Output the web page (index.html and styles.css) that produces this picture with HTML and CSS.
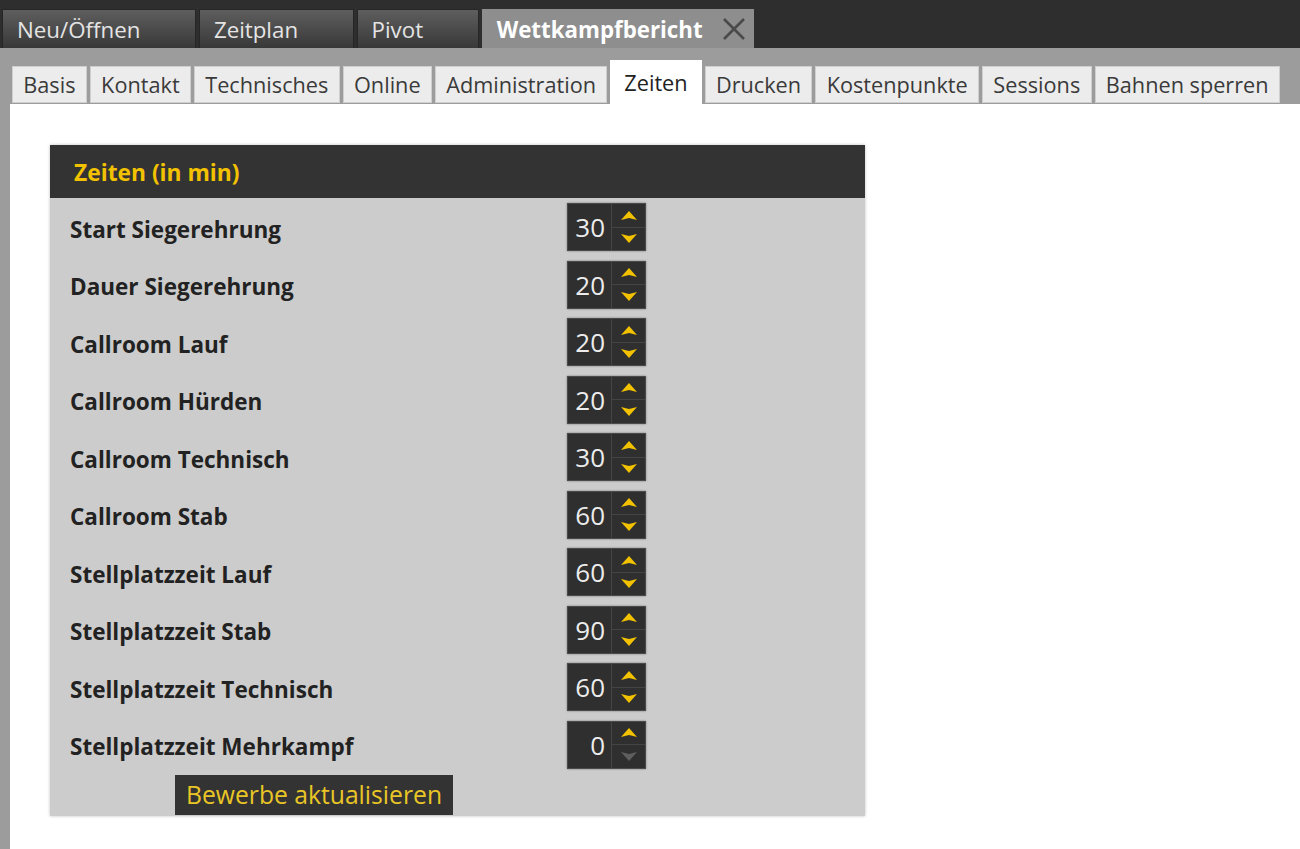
FILE: index.html
```html
<!DOCTYPE html>
<html lang="de">
<head>
<meta charset="utf-8">
<title>Wettkampfbericht – Zeiten</title>
<link rel="stylesheet" href="styles.css">
</head>
<body>
<div class="app">
  <div class="topbar">
    <div class="mtab">Neu/Öffnen</div>
    <div class="mtab">Zeitplan</div>
    <div class="mtab">Pivot</div>
    <div class="mtab mtab-active"><span>Wettkampfbericht</span>
      <svg class="close" width="26" height="26" viewBox="0 0 26 26"><path d="M3 3 L23 23 M23 3 L3 23" stroke="#4a4a4a" stroke-width="2.6" fill="none"/></svg>
    </div>
  </div>
  <div class="subbar">
    <div class="stab">Basis</div>
    <div class="stab">Kontakt</div>
    <div class="stab">Technisches</div>
    <div class="stab">Online</div>
    <div class="stab">Administration</div>
    <div class="stab stab-active">Zeiten</div>
    <div class="stab">Drucken</div>
    <div class="stab">Kostenpunkte</div>
    <div class="stab">Sessions</div>
    <div class="stab">Bahnen sperren</div>
  </div>
  <div class="content">
    <div class="panel">
      <div class="panel-head">Zeiten (in min)</div>
      <div class="panel-body">
        <div class="rows">
          <div class="row"><div class="label">Start Siegerehrung</div><div class="spin"><div class="val">30</div><div class="btns"><div class="up"><svg viewBox="0 0 16 9"><path d="M0 9 L8 0 L16 9 L8 7 Z"/></svg></div><div class="dn"><svg viewBox="0 0 16 9"><path d="M0 0 L8 2 L16 0 L8 9 Z"/></svg></div></div></div></div>
          <div class="row"><div class="label">Dauer Siegerehrung</div><div class="spin"><div class="val">20</div><div class="btns"><div class="up"><svg viewBox="0 0 16 9"><path d="M0 9 L8 0 L16 9 L8 7 Z"/></svg></div><div class="dn"><svg viewBox="0 0 16 9"><path d="M0 0 L8 2 L16 0 L8 9 Z"/></svg></div></div></div></div>
          <div class="row"><div class="label">Callroom Lauf</div><div class="spin"><div class="val">20</div><div class="btns"><div class="up"><svg viewBox="0 0 16 9"><path d="M0 9 L8 0 L16 9 L8 7 Z"/></svg></div><div class="dn"><svg viewBox="0 0 16 9"><path d="M0 0 L8 2 L16 0 L8 9 Z"/></svg></div></div></div></div>
          <div class="row"><div class="label">Callroom Hürden</div><div class="spin"><div class="val">20</div><div class="btns"><div class="up"><svg viewBox="0 0 16 9"><path d="M0 9 L8 0 L16 9 L8 7 Z"/></svg></div><div class="dn"><svg viewBox="0 0 16 9"><path d="M0 0 L8 2 L16 0 L8 9 Z"/></svg></div></div></div></div>
          <div class="row"><div class="label">Callroom Technisch</div><div class="spin"><div class="val">30</div><div class="btns"><div class="up"><svg viewBox="0 0 16 9"><path d="M0 9 L8 0 L16 9 L8 7 Z"/></svg></div><div class="dn"><svg viewBox="0 0 16 9"><path d="M0 0 L8 2 L16 0 L8 9 Z"/></svg></div></div></div></div>
          <div class="row"><div class="label">Callroom Stab</div><div class="spin"><div class="val">60</div><div class="btns"><div class="up"><svg viewBox="0 0 16 9"><path d="M0 9 L8 0 L16 9 L8 7 Z"/></svg></div><div class="dn"><svg viewBox="0 0 16 9"><path d="M0 0 L8 2 L16 0 L8 9 Z"/></svg></div></div></div></div>
          <div class="row"><div class="label">Stellplatzzeit Lauf</div><div class="spin"><div class="val">60</div><div class="btns"><div class="up"><svg viewBox="0 0 16 9"><path d="M0 9 L8 0 L16 9 L8 7 Z"/></svg></div><div class="dn"><svg viewBox="0 0 16 9"><path d="M0 0 L8 2 L16 0 L8 9 Z"/></svg></div></div></div></div>
          <div class="row"><div class="label">Stellplatzzeit Stab</div><div class="spin"><div class="val">90</div><div class="btns"><div class="up"><svg viewBox="0 0 16 9"><path d="M0 9 L8 0 L16 9 L8 7 Z"/></svg></div><div class="dn"><svg viewBox="0 0 16 9"><path d="M0 0 L8 2 L16 0 L8 9 Z"/></svg></div></div></div></div>
          <div class="row"><div class="label">Stellplatzzeit Technisch</div><div class="spin"><div class="val">60</div><div class="btns"><div class="up"><svg viewBox="0 0 16 9"><path d="M0 9 L8 0 L16 9 L8 7 Z"/></svg></div><div class="dn"><svg viewBox="0 0 16 9"><path d="M0 0 L8 2 L16 0 L8 9 Z"/></svg></div></div></div></div>
          <div class="row"><div class="label">Stellplatzzeit Mehrkampf</div><div class="spin"><div class="val">0</div><div class="btns"><div class="up"><svg viewBox="0 0 16 9"><path d="M0 9 L8 0 L16 9 L8 7 Z"/></svg></div><div class="dn disabled"><svg viewBox="0 0 16 9"><path d="M0 0 L8 2 L16 0 L8 9 Z"/></svg></div></div></div></div>
        </div>
        <div class="actions"><div class="btn">Bewerbe aktualisieren</div></div>
      </div>
    </div>
  </div>
</div>
</body>
</html>
```
FILE: styles.css
```css
html, body {
  margin: 0;
  padding: 0;
}
body {
  background: #9c9c9c;
  font-family: "Open Sans", "Noto Sans", sans-serif;
  width: 1300px;
  height: 849px;
  overflow: hidden;
}
.app {
  display: flex;
  flex-direction: column;
  height: 849px;
}
.topbar {
  background: #2e2e2e;
  height: 48px;
  box-sizing: border-box;
  padding: 9px 0 0 2px;
  display: flex;
  gap: 3px;
}
.mtab {
  height: 39px;
  box-sizing: border-box;
  padding: 0 54.5px 0 14px;
  display: flex;
  align-items: center;
  font-size: 22.3px;
  color: #e4e4e4;
  background: linear-gradient(#5e5e5e, #383838);
  border: 1px solid #262626;
  border-bottom: none;
  white-space: nowrap;
}
.mtab-active {
  background: #8e8e8e;
  border-color: #8e8e8e;
  color: #ffffff;
  font-weight: 700;
  padding: 0 6px 0 14px;
  gap: 18px;
}
.close {
  display: block;
}
.subbar {
  height: 56px;
  box-sizing: border-box;
  padding-left: 12px;
  display: flex;
  align-items: flex-end;
  gap: 3px;
}
.stab {
  height: 37px;
  margin-bottom: 1px;
  box-sizing: border-box;
  padding: 0 10.3px;
  display: flex;
  align-items: center;
  font-size: 21.7px;
  color: #3a3a3a;
  background: #ececec;
  border: 1px solid #cfcfcf;
  white-space: nowrap;
  flex-shrink: 0;
}
.stab-active {
  height: 44px;
  margin-bottom: 0;
  background: #ffffff;
  border-color: #ffffff;
  color: #222;
  padding: 0 13px;
}
.content {
  flex: 1;
  background: #ffffff;
  margin-left: 10px;
  padding: 41px 0 0 40px;
}
.panel {
  width: 815px;
  box-shadow: 0 0 3px rgba(0,0,0,0.25);
}
.panel-head {
  height: 53px;
  background: #333333;
  color: #f2c200;
  font-weight: 700;
  font-size: 22.8px;
  display: flex;
  align-items: center;
  padding: 2px 0 0 24px;
  box-sizing: border-box;
}
.panel-body {
  background: #cccccc;
  padding: 5px 0 1px 0;
}
.rows {
  display: flex;
  flex-direction: column;
  gap: 9.5px;
}
.row {
  display: flex;
  align-items: center;
  height: 48px;
  padding-left: 20px;
}
.label {
  width: 497px;
  font-weight: 700;
  font-size: 22.5px;
  color: #222222;
  padding-top: 4px;
}
.spin {
  width: 79px;
  height: 48px;
  box-sizing: border-box;
  display: flex;
  background: #2f2f2f;
  border: 1px solid #4a4a4a;
  box-shadow: 0 0 2px rgba(0,0,0,0.4);
}
.val {
  width: 44px;
  box-sizing: border-box;
  padding-right: 6px;
  text-align: right;
  font-size: 26px;
  line-height: 46px;
  color: #ececec;
  border-right: 1px solid #454545;
}
.btns {
  flex: 1;
  display: flex;
  flex-direction: column;
}
.up, .dn {
  flex: 1;
  display: flex;
  align-items: center;
  justify-content: center;
}
.up {
  border-bottom: 1px solid #444444;
}
.up svg, .dn svg {
  width: 16px;
  height: 9px;
  fill: #f2c200;
}
.dn.disabled svg {
  fill: #5e5e5e;
}
.actions {
  padding: 6px 0 0 125px;
}
.btn {
  display: inline-block;
  height: 40px;
  box-sizing: border-box;
  padding: 0 11px;
  background: #333333;
  color: #e9c626;
  font-size: 24.7px;
  line-height: 40px;
}
```
